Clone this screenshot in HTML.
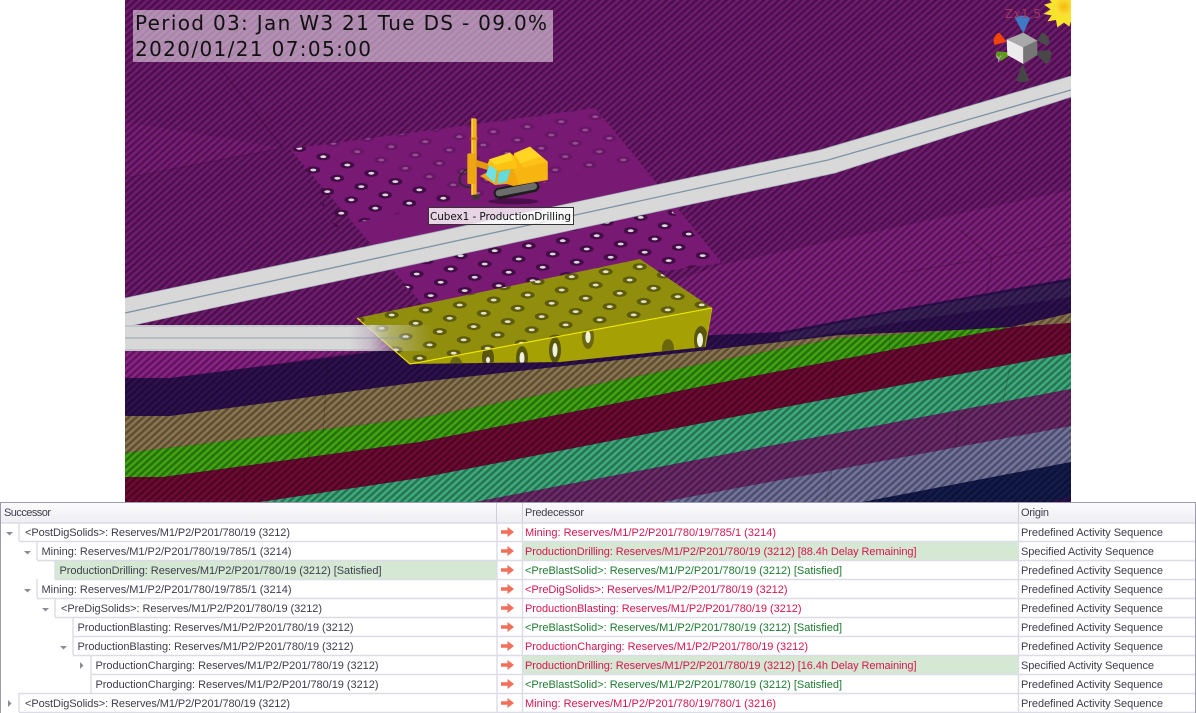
<!DOCTYPE html>
<html><head><meta charset="utf-8"><title>Schedule</title>
<style>
html,body{margin:0;padding:0;background:#fff;width:1196px;height:713px;overflow:hidden}
svg{display:block}
.g text{font-family:"Liberation Sans",sans-serif;font-size:11px}
.s{fill:#3d3d4c}.o{fill:#3d3d4c}.r{fill:#d8154e}.n{fill:#1d7a30}
</style></head><body>
<svg width="1196" height="713" viewBox="0 0 1196 713" xmlns="http://www.w3.org/2000/svg">
<defs>
<pattern id="st" patternUnits="userSpaceOnUse" width="6" height="5" patternTransform="rotate(-42)"><rect width="6" height="2.5" fill="#000" fill-opacity=".33"/></pattern>
<g id="h"><ellipse rx="7" ry="3.6" fill="#430c46"/><ellipse rx="3" ry="1.4" fill="#dcd8dc"/></g>
<g id="hy"><ellipse rx="7" ry="3.6" fill="#5e5b0c"/><ellipse rx="3" ry="1.4" fill="#e4e3cc"/></g>
<g id="rowP">
<use href="#h" x="-238" y="35"/><use href="#h" x="-204" y="30"/><use href="#h" x="-170" y="25"/><use href="#h" x="-136" y="20"/><use href="#h" x="-102" y="15"/><use href="#h" x="-68" y="10"/><use href="#h" x="-34" y="5"/><use href="#h" x="0" y="0"/><use href="#h" x="34" y="-5"/><use href="#h" x="68" y="-10"/><use href="#h" x="102" y="-15"/><use href="#h" x="136" y="-20"/><use href="#h" x="170" y="-25"/><use href="#h" x="204" y="-30"/><use href="#h" x="238" y="-35"/><use href="#h" x="272" y="-40"/><use href="#h" x="306" y="-45"/><use href="#h" x="340" y="-50"/><use href="#h" x="374" y="-55"/><use href="#h" x="408" y="-60"/>
</g>
<g id="rowY">
<use href="#hy" x="-238" y="35"/><use href="#hy" x="-204" y="30"/><use href="#hy" x="-170" y="25"/><use href="#hy" x="-136" y="20"/><use href="#hy" x="-102" y="15"/><use href="#hy" x="-68" y="10"/><use href="#hy" x="-34" y="5"/><use href="#hy" x="0" y="0"/><use href="#hy" x="34" y="-5"/><use href="#hy" x="68" y="-10"/><use href="#hy" x="102" y="-15"/><use href="#hy" x="136" y="-20"/><use href="#hy" x="170" y="-25"/><use href="#hy" x="204" y="-30"/><use href="#hy" x="238" y="-35"/><use href="#hy" x="272" y="-40"/><use href="#hy" x="306" y="-45"/><use href="#hy" x="340" y="-50"/><use href="#hy" x="374" y="-55"/><use href="#hy" x="408" y="-60"/>
</g>
<linearGradient id="rf" gradientUnits="userSpaceOnUse" x1="350" y1="0" x2="432" y2="0"><stop offset="0" stop-color="#d8d8d8" stop-opacity="1"/><stop offset=".25" stop-color="#d8d8d8" stop-opacity=".85"/><stop offset=".5" stop-color="#d8d8d8" stop-opacity=".45"/><stop offset="1" stop-color="#d8d8d8" stop-opacity="0"/></linearGradient>
<linearGradient id="hd" x1="0" y1="0" x2="0" y2="1"><stop offset="0" stop-color="#fbfbfc"/><stop offset="1" stop-color="#eeeef3"/></linearGradient>
<radialGradient id="sun"><stop offset="0" stop-color="#f5b90c"/><stop offset="1" stop-color="#fbe33c"/></radialGradient>
<clipPath id="sc"><rect x="125" y="0" width="946" height="502"/></clipPath>
<clipPath id="pu"><polygon points="290,149 595,108 640,162 335,227"/></clipPath>
<clipPath id="pl"><polygon points="385,264 665,204 722,263 423,305"/></clipPath>
<clipPath id="yt"><polygon points="357,318 640,259 712,308 410,364"/></clipPath>
<clipPath id="yf"><polygon points="410,364 712,308 705,347 560,362"/></clipPath>
<g id="ar"><path d="M0 -1.8H6.5V-5L13 0L6.5 5V1.8H0Z" fill="#f0705c"/></g>
<path id="down" d="M0 0H7L3.5 3.5Z" fill="#8b8b96"/>
<path id="right" d="M0 0L3.5 3.5L0 7Z" fill="#8b8b96"/>
</defs>

<g clip-path="url(#sc)">
<rect x="125" y="0" width="946" height="502" fill="#701a70"/>
<polygon points="125,122 283,148 125,178" fill="#7b1d79"/>
<polygon points="720,265 1071,190 1071,290 780,340 430,370" fill="#81207f"/>
<polygon points="125,345 400,345 170,380 125,380" fill="#8c2187"/>
<polygon points="125,378 170,378 387,350 780,332 900,309 1071,278 1071,502 125,502" fill="#2f1152"/>
<polygon points="780,335 900,311 1071,281 1071,297 900,322 780,342" fill="#4a3568" fill-opacity=".45"/>
<polygon points="125,416 170,416 420,382 780,342 840,335 1007,328 1071,313 1071,323 1013,327 840,338 780,349 420,418 125,453" fill="#8a754e"/>
<polygon points="125,453 420,418 780,349 840,338 993,328 1013,327 780,371 420,442 163,477 125,477" fill="#3fa612"/>
<polygon points="125,477 163,477 420,442 780,371 1013,327 1071,323 1071,353 780,408 420,478 260,502 125,502" fill="#700a34"/>
<polygon points="260,502 420,478 780,408 1071,353 1071,389 780,444 475,502" fill="#3cab7c"/>
<polygon points="475,502 780,444 1071,389 1071,426 780,480 662,502" fill="#6e2b6c"/>
<polygon points="662,502 780,480 1071,426 1071,462 863,502" fill="#73749e"/>
<polygon points="863,502 1071,462 1071,497 1047,502" fill="#141c4e"/>
<rect x="125" y="0" width="946" height="502" fill="url(#st)"/>
<g stroke="#2a0a2a" stroke-opacity=".3" stroke-width="1" fill="none">
<path d="M215 62L283 148M125 178L283 148M900 273L992 258L1071 242M960 230L992 258L987 293"/>
</g>
<g stroke="#12060f" stroke-opacity=".2" stroke-width="1" fill="none">
<path d="M328 360L323 433M310 437L308 457M245 467L242 500M890 337L889 352M837 363L830 398M1010 367L1003 402M960 412L955 447M832 472L826 500"/>
</g>
<polygon points="290,149 595,108 722,263 423,305" fill="#781a74"/>
<g clip-path="url(#pu)">
<use href="#rowP" x="299.3" y="148.4"/><use href="#rowP" x="323.3" y="156.7"/><use href="#rowP" x="347.3" y="165"/><use href="#rowP" x="371.3" y="173.3"/><use href="#rowP" x="395.3" y="181.6"/><use href="#rowP" x="419.3" y="189.9"/><use href="#rowP" x="443.3" y="198.2"/><use href="#rowP" x="467.3" y="206.5"/><use href="#rowP" x="491.3" y="214.8"/><use href="#rowP" x="515.3" y="223.1"/><use href="#rowP" x="539.3" y="231.4"/>
<polygon points="320,147 600,50 800,200 800,313" fill="#781a74" fill-opacity=".72"/>
</g>
<g clip-path="url(#pl)">
<use href="#rowP" x="320.7" y="240.8"/><use href="#rowP" x="344.7" y="249.1"/><use href="#rowP" x="368.7" y="257.4"/><use href="#rowP" x="392.7" y="265.7"/><use href="#rowP" x="416.7" y="274"/><use href="#rowP" x="440.7" y="282.3"/><use href="#rowP" x="464.7" y="290.6"/><use href="#rowP" x="488.7" y="298.9"/><use href="#rowP" x="512.7" y="307.2"/>
</g>
<polygon points="125,298 820,150 1071,76 1071,97 835,173 125,327" fill="#d8d8d8"/>
<path d="M125 313L828 160L1071 90" stroke="#7d93a6" stroke-width="1.3" fill="none"/>
<path d="M125 298L820 150L1071 76" stroke="#9aa8b4" stroke-width=".7" fill="none"/>
<path d="M125 327L835 173L1071 97" stroke="#a4aeb8" stroke-width=".7" fill="none"/>
<!-- machine, drawn in zoomed coordinates -->
<g transform="translate(280 100) scale(.33333)">
<ellipse cx="700" cy="304" rx="75" ry="9" fill="#2a0630" fill-opacity=".6"/>
<path d="M562 208C530 222 528 262 572 262" stroke="#2a2a2a" stroke-width="5" fill="none"/>
<rect x="574" y="55" width="16" height="230" rx="5" fill="#f2b318"/>
<rect x="574" y="55" width="5" height="230" fill="#ffd23a"/>
<rect x="572" y="112" width="20" height="8" fill="#d98f0b"/>
<rect x="562" y="160" width="28" height="92" rx="5" fill="#eda512"/>
<rect x="578" y="284" width="20" height="14" rx="3" fill="#3a3a30"/>
<polygon points="590,180 628,192 628,212 590,200" fill="#e39a0c"/>
<polygon points="640,275 770,242 780,262 770,275 660,298 645,292" fill="#1d1d1d"/>
<rect x="643" y="256" width="132" height="26" rx="13" transform="rotate(-11 709 269)" fill="#6c6c6c" stroke="#1d1d1d" stroke-width="6"/>
<polygon points="600,228 618,238 645,255 680,252 700,258 803,240 803,185 700,200 625,215" fill="#f2a70d"/>
<polygon points="702,160 750,140 803,185 803,240 775,242 715,252 700,205" fill="#f7b512"/>
<polygon points="702,160 750,140 785,170 720,190" fill="#ffd423"/>
<polygon points="720,190 785,170 803,185 730,203" fill="#ffc118"/>
<polygon points="628,178 690,158 705,170 712,205 650,212 622,195" fill="#fcc313"/>
<polygon points="628,178 690,158 700,180 645,195" fill="#ffd725"/>
<polygon points="617,225 628,195 650,210 645,250" fill="#6fe3e4"/>
<polygon points="656,216 692,208 680,245 652,252" fill="#63dadb"/>
</g>
<!-- yellow block -->
<polygon points="357,318 640,259 712,308 410,364" fill="#918e0e"/>
<g clip-path="url(#yt)">
<use href="#rowY" x="343.7" y="298.4"/><use href="#rowY" x="367.7" y="306.7"/><use href="#rowY" x="391.7" y="315"/><use href="#rowY" x="415.7" y="323.3"/><use href="#rowY" x="439.7" y="331.6"/><use href="#rowY" x="463.7" y="339.9"/><use href="#rowY" x="487.7" y="348.2"/><use href="#rowY" x="511.7" y="356.5"/>
</g>
<polygon points="410,364 712,308 705,347 560,362" fill="#a5a004"/>
<g clip-path="url(#yf)">
<ellipse cx="701" cy="340" rx="7" ry="14" fill="#5a570c"/><ellipse cx="700" cy="340" rx="3" ry="7" fill="#f0f0e0"/>
<ellipse cx="588" cy="337" rx="6" ry="12" fill="#6a670c"/><ellipse cx="588" cy="337" rx="2.6" ry="6" fill="#f0f0e0"/>
<ellipse cx="555" cy="350" rx="6" ry="13" fill="#5a570c"/><ellipse cx="555" cy="350" rx="2.5" ry="7" fill="#f0f0e0"/>
<ellipse cx="522" cy="358" rx="6" ry="12" fill="#5a570c"/><ellipse cx="522" cy="358" rx="2.5" ry="6" fill="#f0f0e0"/>
<ellipse cx="488" cy="358" rx="6" ry="11" fill="#5a570c"/><ellipse cx="488" cy="360" rx="2" ry="3" fill="#f0f0e0"/>
<ellipse cx="456" cy="364" rx="6" ry="7" fill="#6a670c"/>
<ellipse cx="668" cy="349" rx="6" ry="10" fill="#6a670c"/>
</g>
<path d="M357 318L410 364L712 308" stroke="#f4ea00" stroke-width="1.1" fill="none"/>
<path d="M712 308L705 347" stroke="#b8b000" stroke-width="1"/>
<!-- lower road -->
<rect x="125" y="325" width="307" height="26" fill="url(#rf)"/>
<path d="M125 338L410 338" stroke="#8698a8" stroke-width="1" stroke-opacity=".8"/>
<path d="M125 326H370M125 350H380" stroke="#9aa8b4" stroke-width=".8"/>
<!-- gizmo, zoomed coordinates -->
<g transform="translate(960 0) scale(.33333)">
<path d="M190 100L165 55C170 44 205 44 210 55Z" fill="#3f78c4"/>
<path d="M140 125L118 98C104 102 95 125 105 135Z" fill="#f0420a"/>
<path d="M232 122L245 98C265 100 275 128 262 138Z" fill="#4a4a4a"/>
<path d="M222 155L268 150C280 158 272 188 258 192Z" fill="#484848"/>
<path d="M188 192L168 240C175 248 200 248 208 240Z" fill="#464646"/>
<path d="M160 158L112 154C100 166 112 182 125 182Z" fill="#5f9a1a"/>
<polygon points="140,118 190,98 232,122 190,142" fill="#a9a9a9"/>
<polygon points="140,118 190,142 190,192 142,165" fill="#ececec"/>
<polygon points="190,142 232,122 232,165 190,192" fill="#767676"/>
<polygon points="310,-30 365,-30 365,55 332,66 328,80 312,68 292,82 288,60 262,64 275,46 250,42 272,28 252,14 275,8 262,-10 285,-6" fill="#f8e32c"/>
<circle cx="312" cy="20" r="28" fill="url(#sun)"/>
</g>
<text x="996" y="62" font-family="'DejaVu Sans',sans-serif" font-size="9" fill="#c9a6e6">Y</text>
<text x="1005" y="18" font-family="'DejaVu Sans',sans-serif" font-size="12" fill="#b04060" fill-opacity=".85" textLength="36">Zx1.5</text>
<!-- overlay text box -->
<rect x="133" y="10" width="420" height="52" fill="#fff" fill-opacity=".5"/>
<text x="135" y="30" font-family="'DejaVu Sans',sans-serif" font-size="20" fill="#111" textLength="412">Period 03: Jan W3 21 Tue DS - 09.0%</text>
<text x="135" y="56" font-family="'DejaVu Sans',sans-serif" font-size="20" fill="#111" textLength="236">2020/01/21 07:05:00</text>
<!-- label -->
<rect x="428.5" y="207.5" width="145" height="17" fill="#fff" fill-opacity=".82" stroke="#333"/>
<text x="430" y="220" font-family="'DejaVu Sans',sans-serif" font-size="10.5" fill="#111" textLength="141">Cubex1 - ProductionDrilling</text>
</g>

<!-- grid -->
<g class="g">
<rect x="0" y="502" width="1196" height="211" fill="#fff"/>
<rect x="0" y="503" width="1196" height="20" fill="url(#hd)"/>
<rect x="0.5" y="502.5" width="1195" height="212" fill="none" stroke="#9c9cb0"/>
<path d="M496.5 503V523M522.5 503V523M1018.5 503V523" stroke="#cfcfdc"/>
<rect x="55" y="561" width="442" height="18" fill="#d5e8d4"/>
<rect x="523" y="542" width="495" height="18" fill="#d5e8d4"/>
<rect x="523" y="656" width="495" height="18" fill="#d5e8d4"/>
<g stroke="#dcdce6" stroke-width="1.4" fill="none">
<path d="M1 523H1195"/>
<path d="M19 541.5H1195M37 560.5H1195M55 579.5H1195M37 598.5H1195M55 617.5H1195M73 636.5H1195M73 655.5H1195M91 674.5H1195M19 693.5H1195M19 712.5H1195"/>
<path d="M19 523V541M37 541V560M55 560V579M37 579V598M55 598V617M73 617V636M73 636V655M91 655V674M91 674V693M19 693V712"/>
<path d="M497 523V712M522.5 523V712M1018.5 523V712"/>
</g>
<text x="4" y="516" class="s" textLength="47">Successor</text>
<text x="525" y="516" class="s" textLength="59">Predecessor</text>
<text x="1021" y="516" class="s" textLength="28">Origin</text>
<use href="#down" x="6" y="532"/><use href="#down" x="24" y="551"/><use href="#down" x="24" y="589"/><use href="#down" x="42" y="608"/><use href="#down" x="60" y="646"/><use href="#right" x="80" y="662"/><use href="#right" x="8" y="700"/>
<text x="25" y="536" class="s" textLength="265">&lt;PostDigSolids&gt;: Reserves/M1/P2/P201/780/19 (3212)</text>
<text x="41.5" y="555" class="s" textLength="250">Mining: Reserves/M1/P2/P201/780/19/785/1 (3214)</text>
<text x="59.5" y="574" class="s" textLength="322">ProductionDrilling: Reserves/M1/P2/P201/780/19 (3212) [Satisfied]</text>
<text x="41.5" y="593" class="s" textLength="250">Mining: Reserves/M1/P2/P201/780/19/785/1 (3214)</text>
<text x="61" y="612" class="s" textLength="261">&lt;PreDigSolids&gt;: Reserves/M1/P2/P201/780/19 (3212)</text>
<text x="77.5" y="631" class="s" textLength="276">ProductionBlasting: Reserves/M1/P2/P201/780/19 (3212)</text>
<text x="77.5" y="650" class="s" textLength="276">ProductionBlasting: Reserves/M1/P2/P201/780/19 (3212)</text>
<text x="95.5" y="669" class="s" textLength="283">ProductionCharging: Reserves/M1/P2/P201/780/19 (3212)</text>
<text x="95.5" y="688" class="s" textLength="283">ProductionCharging: Reserves/M1/P2/P201/780/19 (3212)</text>
<text x="25" y="707" class="s" textLength="265">&lt;PostDigSolids&gt;: Reserves/M1/P2/P201/780/19 (3212)</text>
<use href="#ar" x="501" y="532"/><use href="#ar" x="501" y="551"/><use href="#ar" x="501" y="570"/><use href="#ar" x="501" y="589"/><use href="#ar" x="501" y="608"/><use href="#ar" x="501" y="627"/><use href="#ar" x="501" y="646"/><use href="#ar" x="501" y="665"/><use href="#ar" x="501" y="684"/><use href="#ar" x="501" y="703"/>
<text x="525" y="536" class="r" textLength="251">Mining: Reserves/M1/P2/P201/780/19/785/1 (3214)</text>
<text x="525" y="555" class="r" textLength="391.5">ProductionDrilling: Reserves/M1/P2/P201/780/19 (3212) [88.4h Delay Remaining]</text>
<text x="525" y="574" class="n" textLength="317">&lt;PreBlastSolid&gt;: Reserves/M1/P2/P201/780/19 (3212) [Satisfied]</text>
<text x="525" y="593" class="r" textLength="262.5">&lt;PreDigSolids&gt;: Reserves/M1/P2/P201/780/19 (3212)</text>
<text x="525" y="612" class="r" textLength="276.5">ProductionBlasting: Reserves/M1/P2/P201/780/19 (3212)</text>
<text x="525" y="631" class="n" textLength="317">&lt;PreBlastSolid&gt;: Reserves/M1/P2/P201/780/19 (3212) [Satisfied]</text>
<text x="525" y="650" class="r" textLength="283">ProductionCharging: Reserves/M1/P2/P201/780/19 (3212)</text>
<text x="525" y="669" class="r" textLength="391.5">ProductionDrilling: Reserves/M1/P2/P201/780/19 (3212) [16.4h Delay Remaining]</text>
<text x="525" y="688" class="n" textLength="317">&lt;PreBlastSolid&gt;: Reserves/M1/P2/P201/780/19 (3212) [Satisfied]</text>
<text x="525" y="707" class="r" textLength="251">Mining: Reserves/M1/P2/P201/780/19/780/1 (3216)</text>
<text x="1021" y="536" class="o" textLength="142">Predefined Activity Sequence</text>
<text x="1021" y="555" class="o" textLength="133">Specified Activity Sequence</text>
<text x="1021" y="574" class="o" textLength="142">Predefined Activity Sequence</text>
<text x="1021" y="593" class="o" textLength="142">Predefined Activity Sequence</text>
<text x="1021" y="612" class="o" textLength="142">Predefined Activity Sequence</text>
<text x="1021" y="631" class="o" textLength="142">Predefined Activity Sequence</text>
<text x="1021" y="650" class="o" textLength="142">Predefined Activity Sequence</text>
<text x="1021" y="669" class="o" textLength="133">Specified Activity Sequence</text>
<text x="1021" y="688" class="o" textLength="142">Predefined Activity Sequence</text>
<text x="1021" y="707" class="o" textLength="142">Predefined Activity Sequence</text>
</g>
</svg>
</body></html>
